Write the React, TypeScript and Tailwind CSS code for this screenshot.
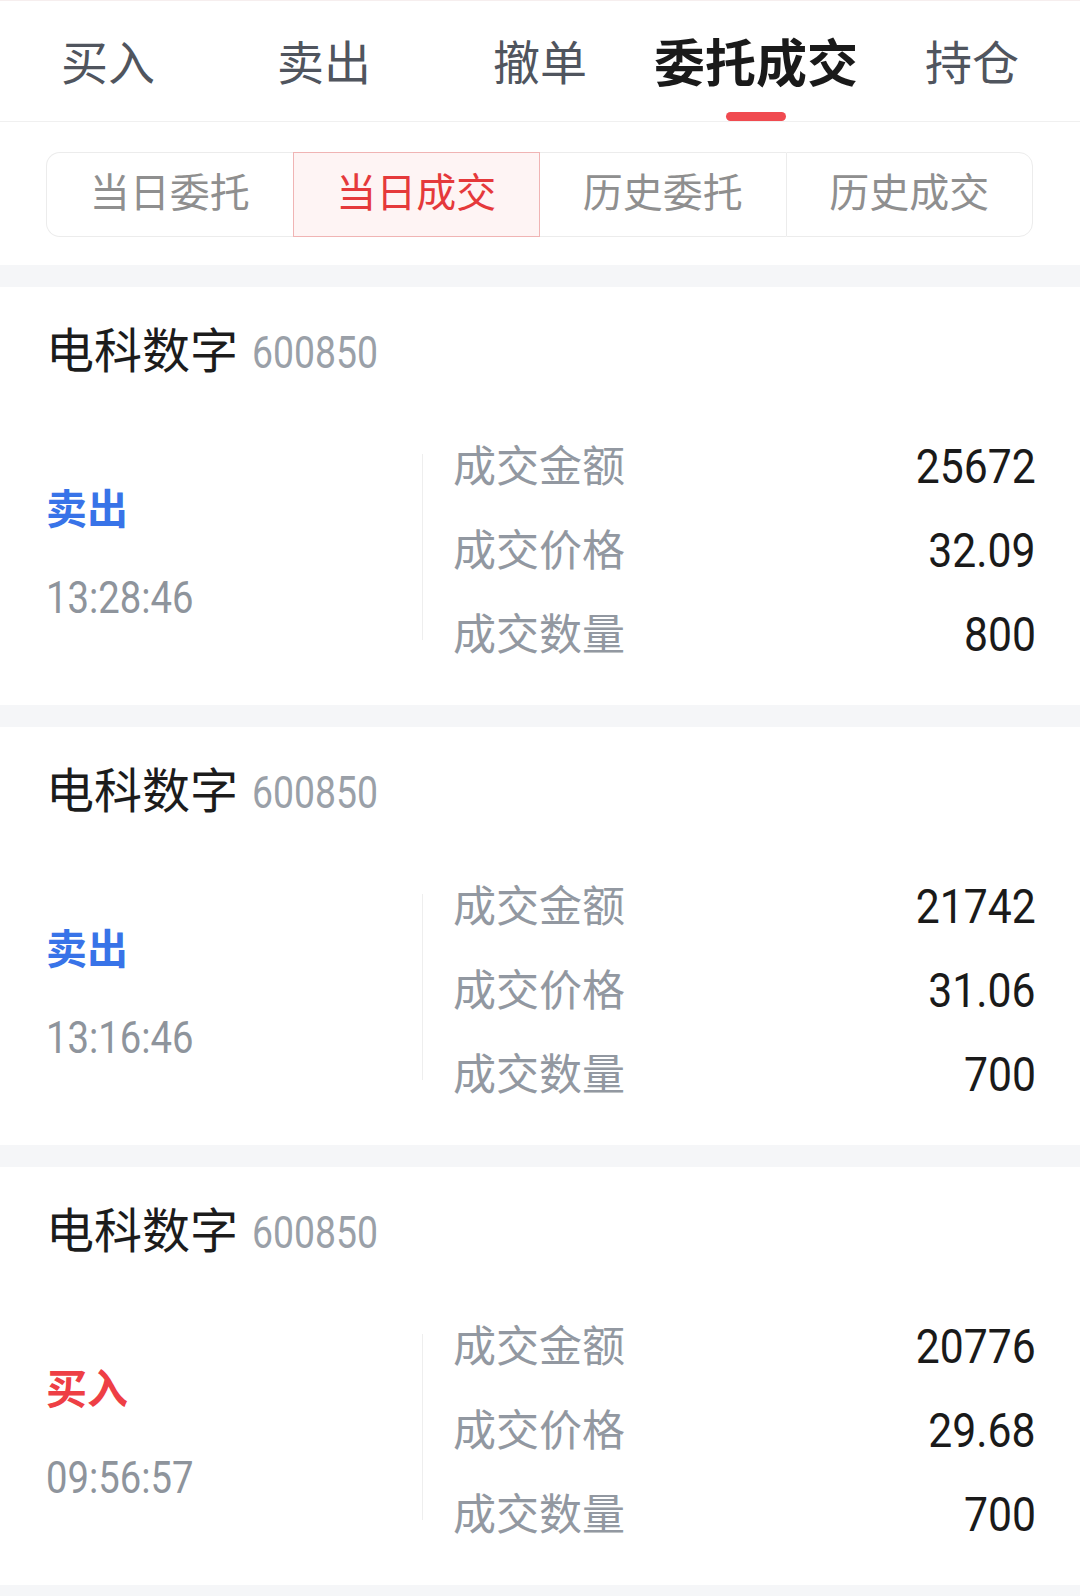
import React from 'react';

const TABS = ['买入', '卖出', '撤单', '委托成交', '持仓'];
const SEGMENTS = ['当日委托', '当日成交', '历史委托', '历史成交'];

interface Trade {
  side: '买入' | '卖出';
  time: string;
  amount: string;
  price: string;
  qty: string;
}

const TRADES: Trade[] = [
  { side: '卖出', time: '13:28:46', amount: '25672', price: '32.09', qty: '800' },
  { side: '卖出', time: '13:16:46', amount: '21742', price: '31.06', qty: '700' },
  { side: '买入', time: '09:56:57', amount: '20776', price: '29.68', qty: '700' },
];

const cjk = "font-['Noto_Sans_CJK_SC',sans-serif]";
// no condensed DIN-like face here, so Roboto squeezed horizontally
const num = "font-['Roboto',sans-serif] inline-block";

function TradeCard({ t }: { t: Trade }) {
  const rows: [string, string][] = [
    ['成交金额', t.amount],
    ['成交价格', t.price],
    ['成交数量', t.qty],
  ];
  return (
    <div className="bg-white pl-[46px] pr-[44px] pt-[36px] pb-[32px]">
      <div className="flex items-baseline h-[48px]">
        <span className={`${cjk} text-[48px] leading-[48px] text-[#1c1c1c]`}>电科数字</span>
        <span className={`${num} ml-[14px] origin-left scale-x-[0.83] text-[45px] leading-[48px] text-[#9aa0a8]`}>
          600850
        </span>
      </div>
      <div className="mt-[50px] flex">
        <div className="w-[376px] shrink-0">
          <div
            className={`${cjk} pt-[61px] text-[41px] leading-[48px] font-bold ${
              t.side === '卖出' ? 'text-[#3873e8]' : 'text-[#ee3f45]'
            }`}
          >
            {t.side}
          </div>
          <div className="mt-[45px] leading-[48px]">
            <span className={`${num} origin-left scale-x-[0.88] text-[43.5px] leading-[48px] text-[#8e949c]`}>
              {t.time}
            </span>
          </div>
        </div>
        <div className="w-px h-[186px] self-center bg-[#eeeeee]" />
        <div className="flex-1 pl-[30px]">
          {rows.map(([label, value]) => (
            <div key={label} className="flex h-[84px] items-center justify-between">
              <span className={`${cjk} text-[43px] leading-[48px] text-[#9298a1]`}>{label}</span>
              <span className={`${num} mt-[8px] origin-right scale-x-[0.89] text-[48px] leading-[48px] text-[#1a1a1a]`}>
                {value}
              </span>
            </div>
          ))}
        </div>
      </div>
    </div>
  );
}

export default function App() {
  return (
    <div className={`${cjk} min-h-[1596px] w-full bg-[#f5f6f8]`}>
      <div className="bg-white border-t border-[#f6eeee]">
        <div className="flex h-[121px] border-b border-[#f0f0f0]">
          {TABS.map((tab, i) => {
            const active = i === 3;
            return (
              <div key={tab} className="relative flex flex-1 items-center justify-center pb-[2px]">
                <span
                  className={
                    active
                      ? 'text-[51px] leading-[56px] font-semibold text-[#1a1a1a]'
                      : 'text-[47px] leading-[56px] text-[#50555e]'
                  }
                >
                  {tab}
                </span>
                {active && (
                  <span className="absolute bottom-0 left-1/2 h-[9px] w-[60px] -translate-x-1/2 rounded-full bg-[#f04a50]" />
                )}
              </div>
            );
          })}
        </div>

        <div className="pl-[46px] pr-[47px] pt-[30px] pb-[28px]">
          <div className="flex h-[85px]">
            {SEGMENTS.map((s, i) => {
              const active = i === 1;
              const cls = active
                ? 'border border-[#f0b4b4] bg-[#fef4f4] text-[#e5393b]'
                : i === 0
                ? 'border-y border-l border-[#ececec] rounded-l-[14px] text-[#8f8f8f]'
                : i === 3
                ? 'border border-[#ececec] rounded-r-[14px] text-[#8f8f8f]'
                : 'border-y border-[#ececec] text-[#8f8f8f]';
              return (
                <div
                  key={s}
                  className={`flex flex-1 items-center justify-center pb-[10px] text-[40px] leading-[48px] ${cls}`}
                >
                  {s}
                </div>
              );
            })}
          </div>
        </div>
      </div>

      <div className="mt-[22px] flex flex-col gap-[22px]">
        {TRADES.map((t, i) => (
          <TradeCard key={i} t={t} />
        ))}
      </div>
    </div>
  );
}
